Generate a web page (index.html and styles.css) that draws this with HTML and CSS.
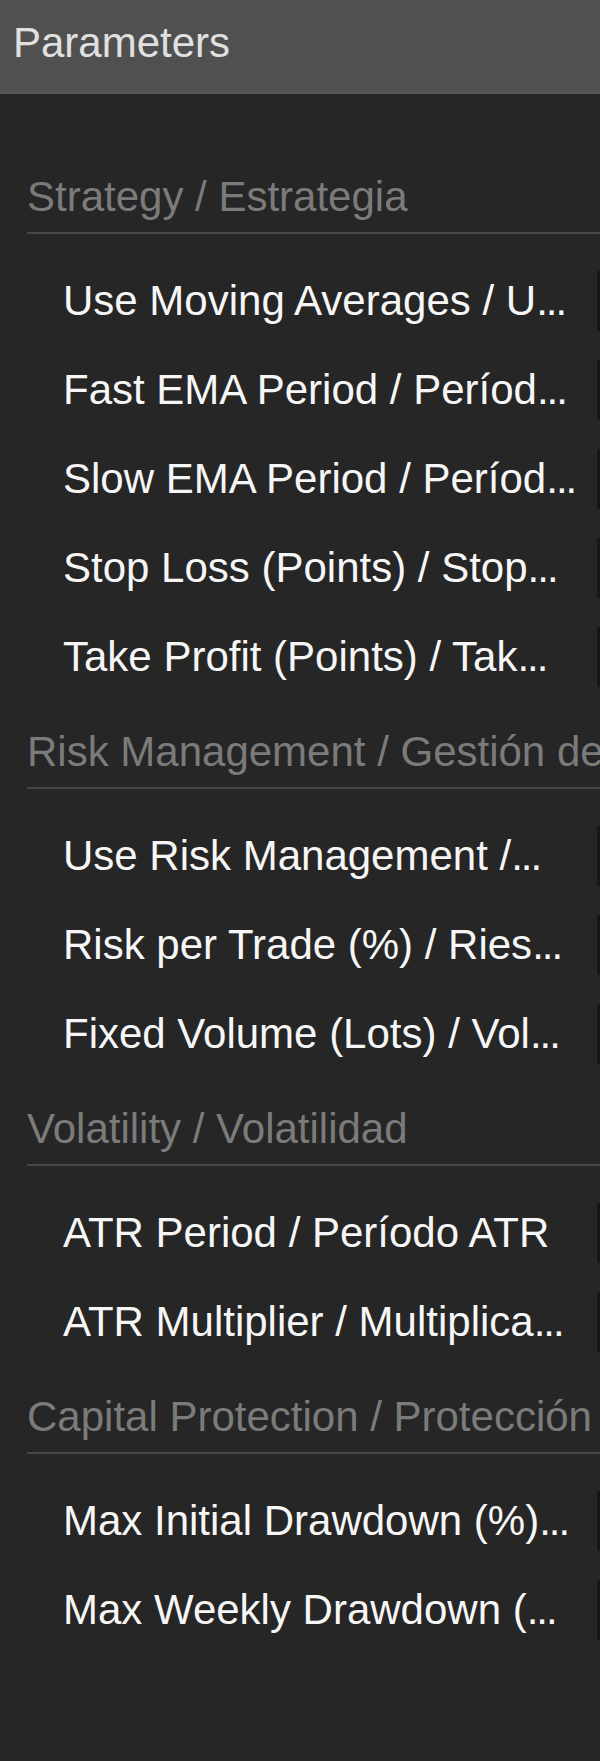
FILE: index.html
```html
<!DOCTYPE html>
<html lang="en">
<head>
<meta charset="utf-8">
<title>Parameters</title>
<link rel="stylesheet" href="styles.css">
</head>
<body>
<div class="panel">
  <div class="panel-header">Parameters</div>
  <div class="panel-body">
    <section class="group">
      <div class="group-title">Strategy / Estrategia</div>
      <div class="rows">
        <div class="row"><span class="label">Use Moving Averages / U<span class="dots">...</span></span><span class="field"></span></div>
        <div class="row"><span class="label">Fast EMA Period / Períod<span class="dots">...</span></span><span class="field"></span></div>
        <div class="row"><span class="label">Slow EMA Period / Períod<span class="dots">...</span></span><span class="field"></span></div>
        <div class="row"><span class="label">Stop Loss (Points) / Stop<span class="dots">...</span></span><span class="field"></span></div>
        <div class="row"><span class="label">Take Profit (Points) / Tak<span class="dots">...</span></span><span class="field"></span></div>
      </div>
    </section>
    <section class="group">
      <div class="group-title">Risk Management / Gestión de Riesgo</div>
      <div class="rows">
        <div class="row"><span class="label">Use Risk Management /<span class="dots">...</span></span><span class="field"></span></div>
        <div class="row"><span class="label">Risk per Trade (%) / Ries<span class="dots">...</span></span><span class="field"></span></div>
        <div class="row"><span class="label">Fixed Volume (Lots) / Vol<span class="dots">...</span></span><span class="field"></span></div>
      </div>
    </section>
    <section class="group">
      <div class="group-title">Volatility / Volatilidad</div>
      <div class="rows">
        <div class="row"><span class="label">ATR Period / Período ATR</span><span class="field"></span></div>
        <div class="row"><span class="label">ATR Multiplier / Multiplica<span class="dots">...</span></span><span class="field"></span></div>
      </div>
    </section>
    <section class="group">
      <div class="group-title">Capital Protection / Protección de Capital</div>
      <div class="rows">
        <div class="row"><span class="label">Max Initial Drawdown (%)<span class="dots">...</span></span><span class="field"></span></div>
        <div class="row"><span class="label">Max Weekly Drawdown (<span class="dots">...</span></span><span class="field"></span></div>
      </div>
    </section>
  </div>
</div>
</body>
</html>
```

FILE: styles.css
```css
html, body {
  margin: 0;
  padding: 0;
  background: #262626;
  overflow: hidden;
}
body {
  font-family: "Liberation Sans", Arial, sans-serif;
  font-size: 42px;
  width: 600px;
  height: 1761px;
}
.panel {
  width: 900px;
}
.panel-header {
  height: 92px;
  line-height: 86px;
  padding: 0 13px;
  background: #505050;
  border-bottom: 2px solid #585858;
  color: #e0e0e0;
  white-space: nowrap;
}
.panel-body {
  padding-top: 52px;
}
.group {
  margin-top: 26px;
}
.group-title {
  margin-left: 27px;
  line-height: 50px;
  padding-bottom: 10px;
  border-bottom: 2px solid #474747;
  color: #7b7b7b;
  white-space: nowrap;
}
.rows {
  padding-top: 22px;
}
.row {
  height: 89px;
  display: flex;
  align-items: center;
  gap: 21px;
  padding-left: 63px;
}
.label {
  flex: 0 0 513px;
  width: 513px;
  white-space: nowrap;
  color: #f6f6f6;
  line-height: 50px;
}
.dots {
  letter-spacing: -2px;
}
.field {
  flex: 0 0 240px;
  height: 60px;
  box-sizing: border-box;
  border-left: 3px solid #161616;
  background: #242424;
}
```
